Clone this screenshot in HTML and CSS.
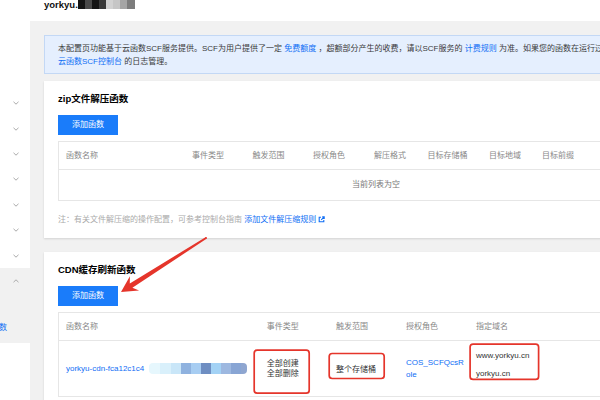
FILE: index.html
```html
<!DOCTYPE html>
<html lang="zh-CN">
<head>
<meta charset="utf-8">
<title>函数配置</title>
<link rel="stylesheet" href="styles.css">
</head>
<body>
<div class="app">
  <aside class="sidebar">
    <div class="nav-item"><svg class="chev" viewBox="0 0 6 4"><polyline points="0.5,0.8 3,3.2 5.5,0.8"/></svg></div>
    <div class="nav-item"><svg class="chev" viewBox="0 0 6 4"><polyline points="0.5,0.8 3,3.2 5.5,0.8"/></svg></div>
    <div class="nav-item"><svg class="chev" viewBox="0 0 6 4"><polyline points="0.5,0.8 3,3.2 5.5,0.8"/></svg></div>
    <div class="nav-item"><svg class="chev" viewBox="0 0 6 4"><polyline points="0.5,0.8 3,3.2 5.5,0.8"/></svg></div>
    <div class="nav-item"><svg class="chev" viewBox="0 0 6 4"><polyline points="0.5,0.8 3,3.2 5.5,0.8"/></svg></div>
    <div class="nav-item"><svg class="chev" viewBox="0 0 6 4"><polyline points="0.5,0.8 3,3.2 5.5,0.8"/></svg></div>
    <div class="nav-item"><svg class="chev" viewBox="0 0 6 4"><polyline points="0.5,0.8 3,3.2 5.5,0.8"/></svg></div>
    <div class="nav-group">
      <div class="nav-item"><svg class="chev" viewBox="0 0 6 4"><polyline points="0.5,3.2 3,0.8 5.5,3.2"/></svg></div>
      <div class="nav-sub"><div class="nav-sub-item">函数</div></div>
    </div>
  </aside>

  <main class="main">
    <header class="topbar">
      <span class="bucket-name">yorkyu.</span>
      <span class="mosaic mosaic-dark"><i></i><i></i><i></i><i></i><i></i><i></i><i></i><i></i></span>
    </header>

    <div class="content">
      <div class="notice">
        <p>本配置页功能基于云函数SCF服务提供。SCF为用户提供了一定 <a href="#">免费额度</a> ，超额部分产生的收费，请以SCF服务的 <a href="#">计费规则</a> 为准。如果您的函数在运行过程中出现异常，可以前往<br><a href="#">云函数SCF控制台</a> 的日志管理。</p>
      </div>

      <section class="card">
        <h2 class="card-title">zip文件解压函数</h2>
        <button class="btn" type="button">添加函数</button>
        <div class="table zip">
          <div class="tr th">
            <div>函数名称</div><div>事件类型</div><div>触发范围</div><div>授权角色</div><div>解压格式</div><div>目标存储桶</div><div>目标地域</div><div>目标前缀</div>
          </div>
          <div class="empty">当前列表为空</div>
        </div>
        <p class="tip">注：有关文件解压缩的操作配置，可参考控制台指南 <a href="#">添加文件解压缩规则<svg class="ext" viewBox="0 0 7 7"><path d="M3 1.2H1.2v4.6h4.6V4"/><path d="M4.2 0.9h2v2M6 1.1L3.2 3.9"/></svg></a></p>
      </section>

      <section class="card">
        <h2 class="card-title">CDN缓存刷新函数</h2>
        <button class="btn" type="button">添加函数</button>
        <div class="table cdn">
          <div class="tr th">
            <div>函数名称</div><div>事件类型</div><div>触发范围</div><div>授权角色</div><div>指定域名</div>
          </div>
          <div class="tr td-row">
            <div><a href="#">yorkyu-cdn-fca12c1c4</a><span class="mosaic mosaic-blue"><i></i><i></i><i></i><i></i><i></i><i></i><i></i><i></i><i></i><i></i></span></div>
            <div><div class="lines-tight">全部创建<br>全部删除</div></div>
            <div>整个存储桶</div>
            <div class="role-cell"><a href="#" class="role">COS_SCFQcsRole</a></div>
            <div><div class="domains"><div>www.yorkyu.cn</div><div>yorkyu.cn</div></div></div>
          </div>
        </div>
      </section>
    </div>
  </main>

  <svg class="annotations" viewBox="0 0 600 400" width="600" height="400">
    <g fill="none" stroke="#e5352b" stroke-width="1.7">
      <rect x="254.2" y="350.2" width="55" height="43" rx="3"/>
      <rect x="329.2" y="353.5" width="55" height="25" rx="3"/>
      <rect x="470.1" y="344.1" width="68.5" height="35.3" rx="3"/>
    </g>
    <g fill="#e5352b">
      <polygon points="205.5,237.2 129.8,283.5 129.9,276.2 121,292 139.1,290.6 132.4,287.7 206.5,238.8"/>
      <circle cx="206" cy="238" r="1"/>
    </g>
  </svg>
</div>
</body>
</html>
```

FILE: styles.css
```css
* { box-sizing: border-box; }

html, body {
  margin: 0;
  padding: 0;
  width: 600px;
  height: 400px;
  overflow: hidden;
}

body {
  font-family: "Liberation Sans", "Noto Sans CJK SC", sans-serif;
  font-size: 8px;
  color: #333;
  background: #f1f1f1;
}

a { color: #0f6ef5; text-decoration: none; }

.app {
  position: relative;
  display: flex;
  width: 600px;
  height: 400px;
}

/* sidebar */
.sidebar {
  flex: none;
  width: 30px;
  background: #fff;
  padding-top: 90.6px;
}
.nav-item {
  height: 25.4px;
  display: flex;
  align-items: center;
  padding-left: 12.7px;
}
.chev { display: block; width: 6px; height: 4px; }
.chev polyline { fill: none; stroke: #aaa; stroke-width: 1; }
.nav-group { background: #f1f1f1; }
.nav-sub { padding: 21px 0 3.5px; }
.nav-sub-item {
  height: 25px;
  line-height: 25px;
  margin-left: -9px;
  white-space: nowrap;
  color: #0f6ef5;
}

/* main */
.main { flex: none; width: 692px; }

.topbar {
  height: 21px;
  background: #fff;
  display: flex;
  align-items: flex-start;
  padding-left: 14px;
}
.bucket-name {
  font-size: 9.5px;
  font-weight: bold;
  line-height: 10px;
  color: #111;
}
.mosaic { display: inline-flex; }
.mosaic i { display: block; }
.mosaic-dark { height: 8.5px; }
.mosaic-dark i { width: 7.1px; height: 100%; }
.mosaic-dark i:nth-child(1) { background: #151515; }
.mosaic-dark i:nth-child(2) { background: #4a4a4a; }
.mosaic-dark i:nth-child(3) { background: #141414; }
.mosaic-dark i:nth-child(4) { background: #3a3a3a; }
.mosaic-dark i:nth-child(5) { background: #d2d2d2; }
.mosaic-dark i:nth-child(6) { background: #c6c6c6; }
.mosaic-dark i:nth-child(7) { background: #a5a5a5; }
.mosaic-dark i:nth-child(8) { background: #7d7d7d; }

.content { padding: 14px; }

.notice {
  background: #e5effe;
  border: 1px solid #c3d8f5;
  padding: 6px 13px 5px;
  line-height: 13px;
  white-space: nowrap;
  color: #3a3a3a;
}
.notice p { margin: 0; }

.card {
  background: #fff;
  margin-top: 7px;
  padding: 11px 14px 12px;
  box-shadow: 0 1px 2px rgba(0, 0, 0, 0.13);
}
.card + .card { margin-top: 14px; }

.card-title {
  margin: 0;
  font-size: 9.5px;
  line-height: 14px;
  font-weight: bold;
  color: #000;
}

.btn {
  display: block;
  margin-top: 9px;
  width: 60px;
  height: 20px;
  padding: 0;
  border: 0;
  background: #1a7cfa;
  color: #fff;
  font-family: inherit;
  font-size: 8px;
  line-height: 20px;
}

.table {
  margin-top: 6px;
  border: 1px solid #e6e6e6;
}
.tr { display: grid; }
.zip .tr { grid-template-columns: 126px 60.5px 60.5px 61px 53.5px 61.5px 53px 1fr; }
.cdn .tr { grid-template-columns: 200.7px 69.3px 70px 70px 1fr; }

.th {
  height: 28px;
  border-bottom: 1px solid #e6e6e6;
  color: #888;
}
.th > div {
  padding-left: 7px;
  line-height: 27px;
  white-space: nowrap;
}

.empty {
  height: 30px;
  line-height: 30px;
  text-align: center;
  color: #777;
}

.td-row { height: 55px; }
.td-row > div {
  display: flex;
  align-items: center;
  padding-left: 7px;
  white-space: nowrap;
}

.mosaic-blue { height: 10.3px; margin-left: 5px; }
.mosaic-blue i { height: 100%; width: 10px; }
.mosaic-blue i:nth-child(1) { width: 11px; background: #e6f7fd; border-radius: 4px 0 0 4px; }
.mosaic-blue i:nth-child(2) { width: 11px; background: #d9f0fb; }
.mosaic-blue i:nth-child(3) { background: #c9e6f8; }
.mosaic-blue i:nth-child(4) { background: #8fb2df; }
.mosaic-blue i:nth-child(5) { background: #a7cdf2; }
.mosaic-blue i:nth-child(6) { background: #6e8ec2; }
.mosaic-blue i:nth-child(7) { background: #a3d2f5; }
.mosaic-blue i:nth-child(8) { background: #9db8e0; }
.mosaic-blue i:nth-child(9) { background: #88a5d4; }
.mosaic-blue i:nth-child(10) { width: 6px; background: #8fa6d0; border-radius: 0 4px 4px 0; }

.lines-tight { line-height: 10px; }

.td-row > .role-cell { white-space: normal; padding-right: 2px; }
.role {
  display: block;
  width: 61px;
  word-break: break-all;
  line-height: 11.7px;
}

.domains {
  display: flex;
  flex-direction: column;
  gap: 6.7px;
  line-height: 12px;
  margin-bottom: 7px;
}

.tip {
  margin: 12px 0 0;
  line-height: 13px;
  color: #aaa;
  white-space: nowrap;
}
.ext {
  width: 7px;
  height: 7px;
  margin-left: 2px;
  vertical-align: -1px;
}
.ext path { fill: none; stroke: #0f6ef5; stroke-width: 1.1; }

.annotations {
  position: absolute;
  left: 0;
  top: 0;
  pointer-events: none;
}
```
